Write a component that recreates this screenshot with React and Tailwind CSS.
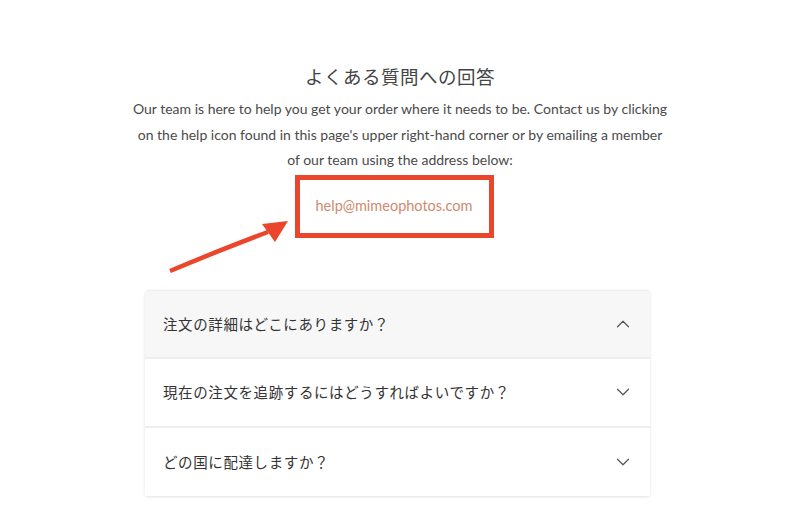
import { ChevronDown, ChevronUp } from 'lucide-react'

const faqs = [
  { q: '注文の詳細はどこにありますか？', open: true },
  { q: '現在の注文を追跡するにはどうすればよいですか？', open: false },
  { q: 'どの国に配達しますか？', open: false },
]

function Arrow() {
  return (
    <svg className="absolute left-[165px] top-[215px]" width="130" height="62" viewBox="165 215 130 62">
      <path d="M170 271 Q 225 248 268 232" fill="none" stroke="#e9462b" strokeWidth="4.5" strokeLinecap="butt" />
      <polygon points="288,221 262,224 275,242" fill="#e9462b" />
    </svg>
  )
}

export default function App() {
  return (
    <div className="relative w-[800px] h-[513px] overflow-hidden bg-white" style={{ fontFamily: '"Lato", "Noto Sans CJK JP", sans-serif' }}>
      <main className="flex flex-col items-center pt-[62px]">
        <h1 className="text-[18.5px] leading-[28px] text-[#444] tracking-[0.5px]" style={{ fontFamily: '"Noto Sans CJK JP", sans-serif' }}>
          よくある質問への回答
        </h1>
        <p className="mt-[6px] w-[540px] text-center text-[14px] leading-[25.5px] text-[#4a4a4a]">
          Our team is here to help you get your order where it needs to be. Contact us by clicking on the help icon found in this page's upper right-hand corner or by emailing a member of our team using the address below:
        </p>
        <div className="mt-[2px] mr-[12px] w-[199px] h-[63px] border-[5px] border-[#e9462b] flex items-center justify-center">
          <span className="text-[14.5px] text-[#cf8a70]">help@mimeophotos.com</span>
        </div>

        <div className="mt-[52px] mr-[5px] w-[505px] rounded-[3px] shadow-[0_1px_3px_rgba(0,0,0,0.12)] border-t border-[#f0f0f0]" style={{ fontFamily: '"Noto Sans CJK JP", sans-serif' }}>
          {faqs.map((f, i) => (
            <div
              key={i}
              className={`flex items-center justify-between ${i === 1 ? 'h-[69px]' : 'h-[68px]'} pl-[18px] pr-[16px] ${f.open ? 'bg-[#f7f7f7]' : 'bg-white'} ${i < faqs.length - 1 ? 'border-b-2 border-[#eeeeee]' : ''}`}
            >
              <span className="text-[14.5px] text-[#333] tracking-[0.6px]">{f.q}</span>
              {f.open ? (
                <ChevronUp size={22} strokeWidth={1.3} color="#555" />
              ) : (
                <ChevronDown size={22} strokeWidth={1.3} color="#555" />
              )}
            </div>
          ))}
        </div>
      </main>
      <Arrow />
    </div>
  )
}
